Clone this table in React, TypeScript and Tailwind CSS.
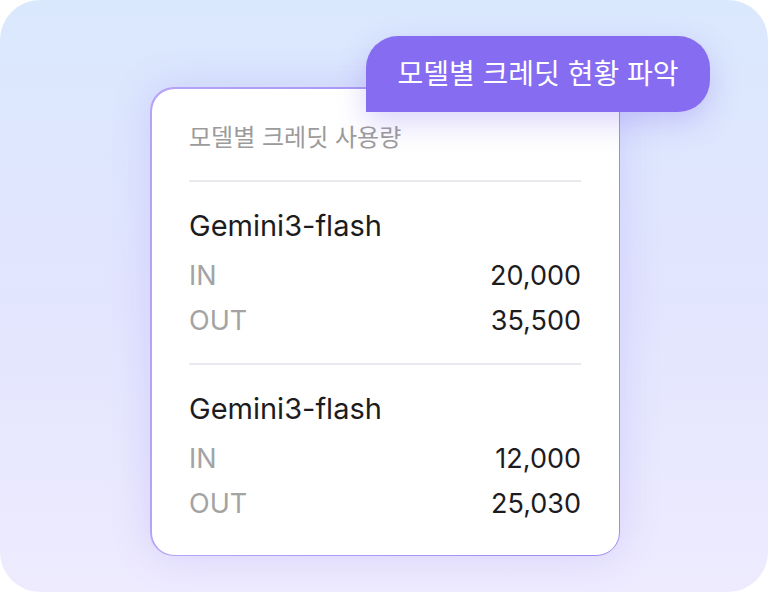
import React from "react";

const KR = "font-['Inter','Noto_Sans_CJK_KR',sans-serif]";

function Row({ label, value, className = "" }: { label: string; value: string; className?: string }) {
  return (
    <div className={`flex items-center justify-between h-[32px] text-[27px] leading-[32px] ${className}`}>
      <span className="text-[#a3a3a3]">{label}</span>
      <span className="text-[#1c1c1e]">{value}</span>
    </div>
  );
}

function Group({ inV, outV }: { inV: string; outV: string }) {
  return (
    <div className="flex flex-col">
      <div className="h-[32px] text-[29px] leading-[32px] text-[#1c1c1e]">Gemini3-flash</div>
      <Row label="IN" value={inV} className="mt-[18px]" />
      <Row label="OUT" value={outV} className="mt-[13px]" />
    </div>
  );
}

export default function App() {
  return (
    <div className={`w-[768px] h-[592px] bg-white ${KR}`}>
      <div className="w-full h-full rounded-[40px] bg-gradient-to-b from-[#dae8fd] via-[#e2e5fe] to-[#eeebfe] pl-[150px] pt-[87px]">
        <div className="relative w-[470px] h-[469px]">
          <div className="w-full h-full rounded-[24px] bg-gradient-to-r from-[#b5a4f6] to-[#9c8af4] p-[1.5px] shadow-[0_0_40px_rgba(124,92,246,0.18)]">
            <div className="w-full h-full rounded-[22.5px] bg-white flex flex-col px-[37.5px] pt-[35.5px]">
              <div className="h-[28px] text-[24px] leading-[28px] text-[#9b9b9b]">모델별 크레딧 사용량</div>
              <div className="mt-[28px] h-[2px] bg-[#e9e9ee]" />
              <div className="mt-[28px]">
                <Group inV="20,000" outV="35,500" />
              </div>
              <div className="mt-[26px] h-[2px] bg-[#e9e9ee]" />
              <div className="mt-[28px]">
                <Group inV="12,000" outV="25,030" />
              </div>
            </div>
          </div>
          <div className="absolute left-[216px] top-[-51px] w-[344px] h-[76px] rounded-[32px] rounded-bl-none bg-[#866cf0] shadow-[0_10px_30px_rgba(134,108,240,0.3)] flex items-center justify-center text-white text-[28px] leading-[32px]">
            모델별 크레딧 현황 파악
          </div>
        </div>
      </div>
    </div>
  );
}
